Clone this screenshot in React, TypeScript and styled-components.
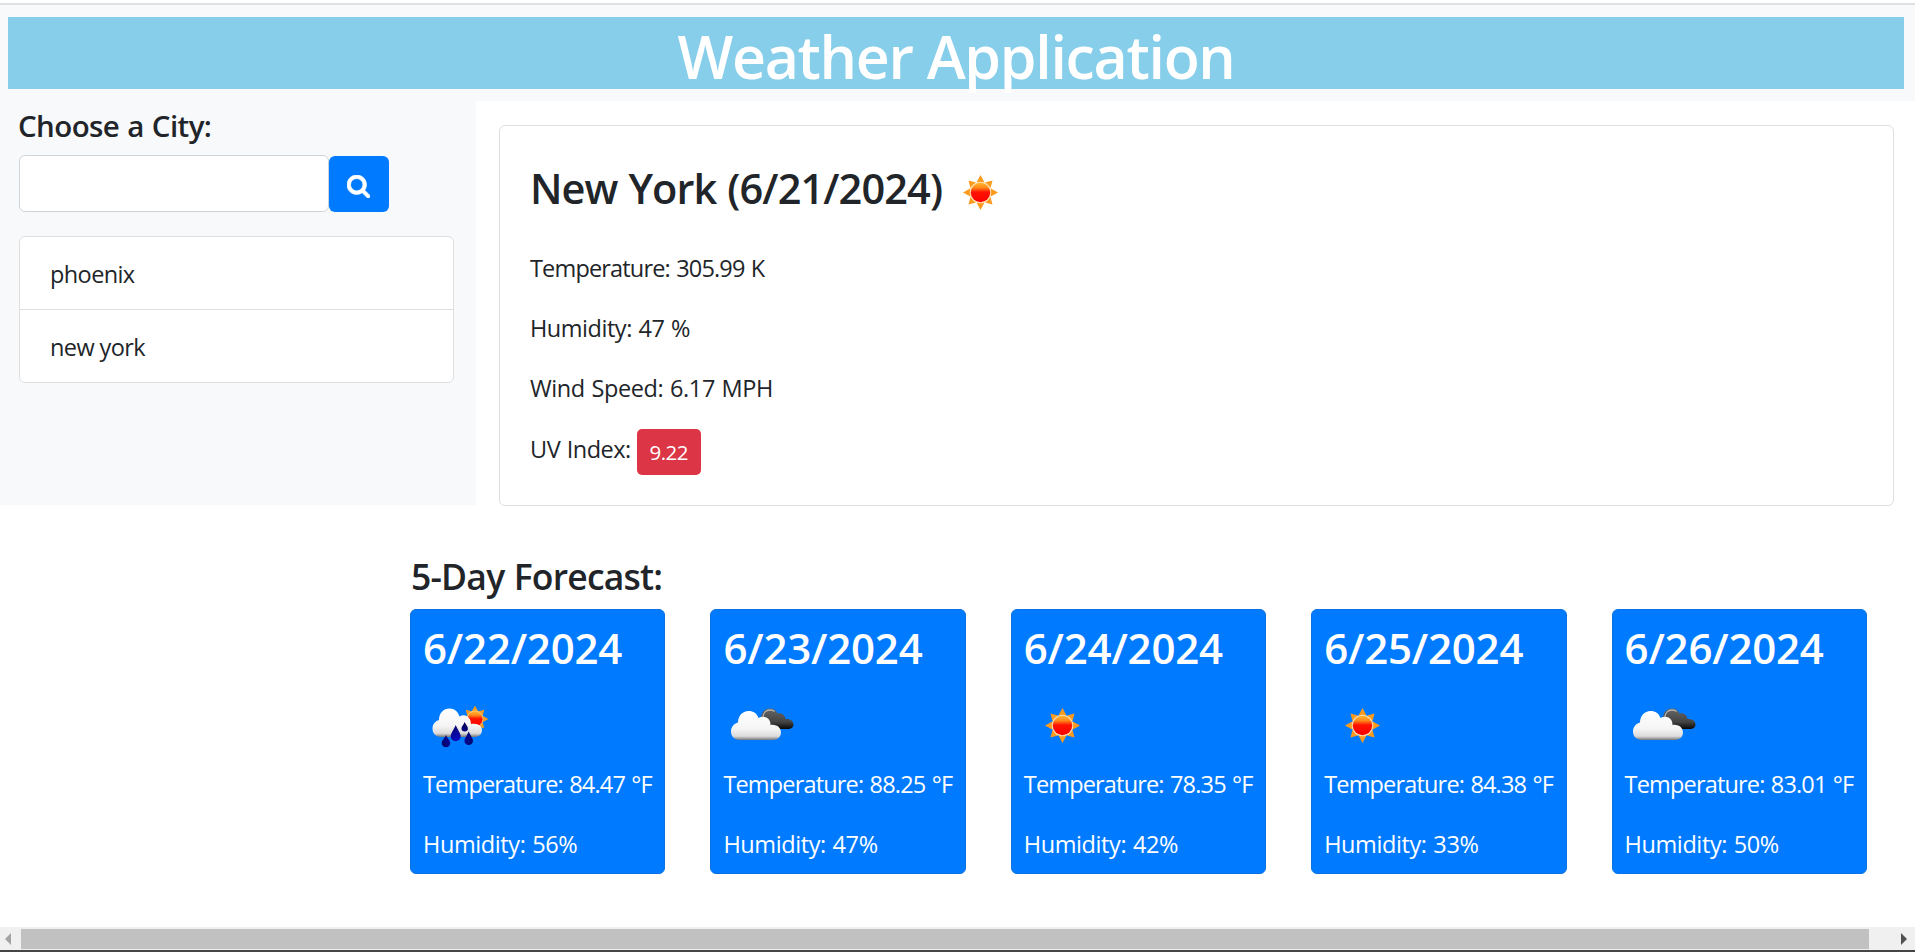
import React from "react";
import styled, { createGlobalStyle } from "styled-components";

const GlobalStyle = createGlobalStyle`
  * { box-sizing: border-box; }
  body {
    margin: 0;
    background: #fff;
    color: #212529;
    font-family: "Open Sans", "Noto Sans", sans-serif;
    font-size: 23.5px;
    line-height: 36px;
    overflow: hidden;
  }
  h1, h3, h4, h5, p, ul { margin: 0; padding: 0; }
`;

const Page = styled.div`
  display: flex;
  flex-direction: column;
  width: 1915px;
  height: 952px;
  background: #fff;
`;

const TopEdge = styled.div`
  height: 5px;
  flex: none;
  border-bottom: 2px solid #dfe0e1;
`;

const Header = styled.header`
  flex: none;
  height: 96px;
  padding: 12px 11px 12px 8px;
  background: #f8f9fb;
`;

const Title = styled.h1`
  height: 72px;
  padding-top: 3px;
  background: #87ceeb;
  color: #fff;
  text-align: center;
  font-size: 59px;
  font-weight: 600;
  line-height: 72px;
  letter-spacing: -1.3px;
  white-space: nowrap;
`;

const Upper = styled.div`
  display: flex;
  flex: none;
  height: 404px;
`;

const Sidebar = styled.aside`
  width: 476px;
  padding: 6px 22px 0 19px;
  background: #f8f9fb;
`;

const SideHeading = styled.h5`
  height: 47px;
  margin-left: -1px;
  font-size: 29.5px;
  font-weight: 600;
  line-height: 38px;
  letter-spacing: -0.6px;
  word-spacing: 1px;
  white-space: nowrap;
`;

const SearchRow = styled.form`
  display: flex;
  align-items: flex-end;
  height: 58px;
`;

const CityInput = styled.input`
  width: 310px;
  height: 57px;
  border: 1px solid #ced4da;
  border-radius: 6px;
  background: #fff;
  outline: none;
`;

const SearchButton = styled.button`
  display: flex;
  align-items: center;
  justify-content: center;
  width: 60px;
  height: 56px;
  padding: 4px 1px 0 0;
  border: 0;
  border-radius: 6px;
  background: #007bff;
`;

const CityList = styled.ul`
  margin-top: 24px;
  width: 435px;
  border: 1px solid #dfdfdf;
  border-radius: 6px;
  background: #fff;
  list-style: none;
`;

const City = styled.li`
  height: 72px;
  padding: 19px 30px 0;
  letter-spacing: -0.6px;
  & + & {
    height: 73px;
    border-top: 1px solid #dfdfdf;
  }
`;

const CurrentCard = styled.section`
  width: 1395px;
  height: 381px;
  margin: 24px 0 0 23px;
  padding: 37px 30px 0;
  border: 1px solid #dfdfdf;
  border-radius: 6px;
`;

const CurrentHeading = styled.h3`
  display: flex;
  align-items: center;
  height: 51px;
  margin-bottom: 36px;
  font-size: 41.5px;
  font-weight: 600;
  line-height: 51px;
  letter-spacing: -0.9px;
  word-spacing: 1px;
  white-space: nowrap;
  svg { margin: 7px 0 0 1px; }
`;

const Reading = styled.p<{ $spacing: number }>`
  height: 36px;
  margin-bottom: 24px;
  letter-spacing: ${(p) => p.$spacing}px;
  word-spacing: 1px;
  white-space: nowrap;
`;

const UvReading = styled(Reading)`
  display: flex;
  height: 46px;
  gap: 6px;
  padding-top: 1px;
`;

const UvBadge = styled.span`
  width: 64px;
  height: 46px;
  margin-top: -2px;
  border-radius: 5px;
  background: #dc3545;
  color: #fff;
  font-size: 20.5px;
  line-height: 46px;
  text-align: center;
`;

const Forecast = styled.section`
  flex: 1;
  padding: 49px 0 0 410px;
`;

const ForecastHeading = styled.h4`
  height: 55px;
  padding-left: 1px;
  font-size: 35.5px;
  font-weight: 600;
  line-height: 44px;
  letter-spacing: -0.8px;
  word-spacing: 1px;
`;

const Cards = styled.div`
  display: flex;
  gap: 45px;
`;

const DayCard = styled.article`
  width: 255.4px;
  height: 265px;
  padding: 13px 12px 0;
  border: 1px solid #0a72e2;
  border-radius: 6px;
  background: #007bff;
  color: #fff;
`;

const DayDate = styled.h3`
  height: 50px;
  font-size: 42px;
  font-weight: 600;
  line-height: 50px;
  letter-spacing: -0.2px;
`;

const IconSlot = styled.div`
  height: 75px;
  margin: 15px 0 3px 1px;
`;

const ScrollTrack = styled.div`
  display: flex;
  align-items: center;
  flex: none;
  height: 25px;
  border-bottom: 2px solid #454545;
  background: #f0f0f0;
`;

const ScrollThumb = styled.div`
  width: 1848px;
  height: 20px;
  background: #c1c1c1;
`;

const ScrollArrow = styled.svg<{ $right?: boolean }>`
  width: ${(p) => (p.$right ? 46 : 21)}px;
  height: 12px;
  flex: none;
`;

const HiddenDefs = styled.svg`
  display: block;
  flex: none;
  width: 0;
  height: 0;
`;

function spikes(cx: number, cy: number, outer: number, inner: number, half: number) {
  return Array.from({ length: 8 }, (_, i) => {
    const angle = (i * Math.PI) / 4;
    const reach = i % 2 ? outer * 0.97 : outer;
    const at = (r: number, a: number) =>
      `${(cx + r * Math.cos(a)).toFixed(2)},${(cy + r * Math.sin(a)).toFixed(2)}`;
    return `M${at(reach, angle)}L${at(inner, angle + half)}L${at(inner, angle - half)}Z`;
  }).join("");
}

const Gradients = () => (
  <HiddenDefs>
    <defs>
      <linearGradient id="disc" x1="0" y1="0" x2="0" y2="1">
        <stop offset="0" stopColor="#ffb52e" />
        <stop offset="0.25" stopColor="#ff8a1c" />
        <stop offset="0.48" stopColor="#ff1200" />
        <stop offset="1" stopColor="#fa0000" />
      </linearGradient>
      <linearGradient id="white" x1="0" y1="0" x2="0" y2="1">
        <stop offset="0" stopColor="#fff" />
        <stop offset="0.6" stopColor="#f5f5f5" />
        <stop offset="0.87" stopColor="#dcdcdc" />
        <stop offset="1" stopColor="#777" />
      </linearGradient>
      <linearGradient id="dark" x1="0" y1="0" x2="0" y2="1">
        <stop offset="0" stopColor="#666" />
        <stop offset="0.65" stopColor="#444" />
        <stop offset="1" stopColor="#080808" />
      </linearGradient>
      <radialGradient id="drop" cx="0.5" cy="0.65" r="0.6">
        <stop offset="0" stopColor="#0b0bc0" />
        <stop offset="1" stopColor="#04045e" />
      </radialGradient>
    </defs>
  </HiddenDefs>
);

const SunIcon = () => (
  <svg width="75" height="75" viewBox="0 0 75 75">
    <path d={spikes(37.5, 37.5, 17.5, 11, 0.36)} fill="#fb9a1c" />
    <circle cx="37.5" cy="37.5" r="10.8" fill="#ffdca8" />
    <circle cx="37.5" cy="37.5" r="9.7" fill="url(#disc)" />
  </svg>
);

const CloudsIcon = () => (
  <svg width="75" height="75" viewBox="0 0 75 75">
    <path
      d="M37 31C37 24 41 20.5 46 20.5C50 20.5 52.5 22.5 53.5 25.5C57.500 24.500 61 27 61.500 31C66 30.500 69.500 33 69.500 36.500C69.500 39.500 67 41 64 41H42Z"
      fill="url(#dark)"
    />
    <path d="M39 30C39 25 42 22 46 22C48 22 49.500 22.500 50.500 23.500" fill="none" stroke="#b5b5b5" strokeWidth="1.3" />
    <path
      d="M16 52C10 52 7 48 7 43.500C7 39 10 35.500 14 34.500C14 28 18.500 23 24.500 23C29.500 23 33 25.500 34.500 30C40 26.500 47 30 46.500 37C53 36 57 40 57 44.500C57 49 53.500 52 49 52Z"
      fill="url(#white)"
    />
  </svg>
);

const drop = (cx: number, top: number, bottom: number, r: number) =>
  `M${cx} ${top}C${cx + r * 0.3} ${top + r * 0.8} ${cx + r} ${bottom - r * 1.6} ${cx + r} ${bottom - r}` +
  `A${r} ${r} 0 0 1 ${cx - r} ${bottom - r}C${cx - r} ${bottom - r * 1.6} ${cx - r * 0.3} ${top + r * 0.8} ${cx} ${top}Z`;

const RainIcon = () => (
  <svg width="75" height="75" viewBox="0 0 75 75">
    <path d={spikes(51, 31, 13.4, 8.6, 0.36)} fill="#f39a22" />
    <circle cx="51" cy="31" r="8.5" fill="#ffc66c" />
    <circle cx="51" cy="31" r="7.6" fill="url(#disc)" />
    <path
      d="M17 49C11.500 49 8.500 45 8.500 40.500C8.500 36 11.500 33 15 32C15 25 19.500 20.500 25.500 20.500C30.500 20.500 34 23.500 35.500 28.500C41 25 47 29 47 36C54 34.500 58 38 58 42C58 46.500 54.500 49 50.500 49Z"
      fill="url(#white)"
    />
    <path
      d={drop(31.7, 37, 53.3, 5) + drop(22, 47, 59.3, 4.3) + drop(44.7, 43.5, 57, 4.3) + drop(40.7, 34, 43.5, 3.2)}
      fill="url(#drop)"
    />
  </svg>
);

const SearchIcon = () => (
  <svg width="23" height="23" viewBox="0 128 1664 1664">
    <path
      fill="#fff"
      stroke="#fff"
      strokeWidth="50"
      d="M1152 832q0-185-131.5-316.5t-316.5-131.5-316.5 131.5-131.5 316.5 131.5 316.5 316.5 131.5 316.5-131.5 131.5-316.5zm512 832q0 52-38 90t-90 38q-54 0-90-38l-343-342q-179 124-399 124-143 0-273.5-55.5t-225-150-150-225-55.5-273.5 55.5-273.5 150-225 225-150 273.5-55.5 273.5 55.5 225 150 150 225 55.5 273.5q0 220-124 399l343 343q37 37 37 90z"
    />
  </svg>
);

const icons = { rain: RainIcon, clouds: CloudsIcon, sun: SunIcon };

const days: { date: string; icon: keyof typeof icons; temp: string; humidity: string }[] = [
  { date: "6/22/2024", icon: "rain", temp: "84.47", humidity: "56" },
  { date: "6/23/2024", icon: "clouds", temp: "88.25", humidity: "47" },
  { date: "6/24/2024", icon: "sun", temp: "78.35", humidity: "42" },
  { date: "6/25/2024", icon: "sun", temp: "84.38", humidity: "33" },
  { date: "6/26/2024", icon: "clouds", temp: "83.01", humidity: "50" },
];

export default function App() {
  return (
    <Page>
      <GlobalStyle />
      <Gradients />
      <TopEdge />
      <Header>
        <Title>Weather Application</Title>
      </Header>
      <Upper>
        <Sidebar>
          <SideHeading>Choose a City:</SideHeading>
          <SearchRow>
            <CityInput type="text" />
            <SearchButton type="button">
              <SearchIcon />
            </SearchButton>
          </SearchRow>
          <CityList>
            <City>phoenix</City>
            <City>new york</City>
          </CityList>
        </Sidebar>
        <CurrentCard>
          <CurrentHeading>
            New York (6/21/2024)
            <SunIcon />
          </CurrentHeading>
          <Reading $spacing={-0.83}>Temperature: 305.99 K</Reading>
          <Reading $spacing={-0.47}>Humidity: 47 %</Reading>
          <Reading $spacing={-0.4}>Wind Speed: 6.17 MPH</Reading>
          <UvReading $spacing={-0.5}>
            UV Index: <UvBadge>9.22</UvBadge>
          </UvReading>
        </CurrentCard>
      </Upper>
      <Forecast>
        <ForecastHeading>5-Day Forecast:</ForecastHeading>
        <Cards>
          {days.map((day) => {
            const Icon = icons[day.icon];
            return (
              <DayCard key={day.date}>
                <DayDate>{day.date}</DayDate>
                <IconSlot>
                  <Icon />
                </IconSlot>
                <Reading $spacing={-0.83}>Temperature: {day.temp} °F</Reading>
                <Reading $spacing={-0.4}>Humidity: {day.humidity}%</Reading>
              </DayCard>
            );
          })}
        </Cards>
      </Forecast>
      <ScrollTrack>
        <ScrollArrow viewBox="0 0 21 12">
          <path d="M11 0V12L5 6Z" fill="#a3a3a3" />
        </ScrollArrow>
        <ScrollThumb />
        <ScrollArrow $right viewBox="0 0 46 12">
          <path d="M32 0V12L38 6Z" fill="#505050" />
        </ScrollArrow>
      </ScrollTrack>
    </Page>
  );
}
